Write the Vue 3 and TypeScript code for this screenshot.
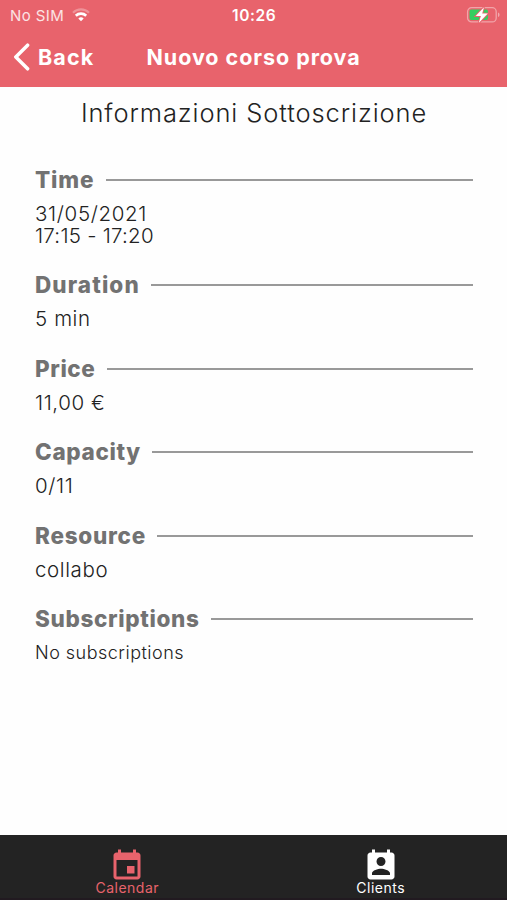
<script setup lang="ts">
interface Section {
  id: string
  title: string
  value: string
}

const sections: Section[] = [
  { id: 'time', title: 'Time', value: '31/05/2021\n17:15 - 17:20' },
  { id: 'duration', title: 'Duration', value: '5 min' },
  { id: 'price', title: 'Price', value: '11,00 €' },
  { id: 'capacity', title: 'Capacity', value: '0/11' },
  { id: 'resource', title: 'Resource', value: 'collabo' },
  { id: 'subscriptions', title: 'Subscriptions', value: 'No subscriptions' },
]
</script>

<template>
  <div class="screen">
    <header class="header">
      <div class="status">
        <div class="carrier">
          <span>No SIM</span>
          <svg class="wifi" viewBox="0 0 18 14" width="18" height="14">
            <path d="M1 4.7a11.5 11.5 0 0 1 16 0" fill="none" stroke="#fff" stroke-opacity=".3" stroke-width="2.2" />
            <path d="M3.8 7.7a7.5 7.5 0 0 1 10.4 0" fill="none" stroke="#fff" stroke-width="2.6" />
            <path d="M6.3 10.4a4 4 0 0 1 5.4 0L9 13.2z" fill="#fff" />
          </svg>
        </div>
        <span class="clock">10:26</span>
        <svg class="battery" viewBox="0 0 34 18" width="34" height="18">
          <rect x="1.6" y="1.7" width="28.6" height="14.2" rx="4" fill="none" stroke="#fff" stroke-opacity=".42" stroke-width="1.3" />
          <path d="M32 6.5q1.6 .6 1.6 2.3t-1.6 2.3z" fill="#fff" fill-opacity=".45" />
          <rect x="3.5" y="3.6" width="18.5" height="10.4" rx="2" fill="#35ce60" />
          <path d="M18 1.2L9.7 10h5.2l-2.2 7L21.8 7.6h-5.6z" fill="#fff" stroke="#e8636c" stroke-width="1.8" paint-order="stroke" />
        </svg>
      </div>
      <nav class="navbar">
        <button class="back">
          <svg viewBox="0 0 18 28" width="18" height="28">
            <path d="M15.6 2.2L3.8 14l11.8 11.8" fill="none" stroke="#fff" stroke-width="3.5" stroke-linecap="round" stroke-linejoin="round" />
          </svg>
          <span>Back</span>
        </button>
        <h1 class="page-title">Nuovo corso prova</h1>
      </nav>
    </header>

    <main class="content">
      <h2 class="subtitle">Informazioni Sottoscrizione</h2>
      <section v-for="s in sections" :key="s.id" class="section" :class="s.id">
        <h3 class="heading">{{ s.title }}</h3>
        <p class="value">{{ s.value }}</p>
      </section>
    </main>

    <footer class="tabs">
      <div class="tab active">
        <svg viewBox="0 0 24 24" width="36" height="36">
          <path fill="currentColor" d="M17 12h-5v5h5v-5zM16 1v2H8V1H6v2H5c-1.11 0-1.99.9-1.99 2L3 19c0 1.1.89 2 2 2h14c1.1 0 2-.9 2-2V5c0-1.1-.9-2-2-2h-1V1h-2zm3 18H5V8h14v11z" />
        </svg>
        <span>Calendar</span>
      </div>
      <div class="tab">
        <svg viewBox="0 0 24 24" width="36" height="36">
          <path fill="currentColor" d="M19 3h-1V1h-2v2H8V1H6v2H5c-1.11 0-2 .9-2 2v14c0 1.1.89 2 2 2h14c1.1 0 2-.9 2-2V5c0-1.1-.9-2-2-2zm-7 3c1.66 0 3 1.34 3 3s-1.34 3-3 3-3-1.34-3-3 1.34-3 3-3zm6 12H6v-1c0-2 4-3.1 6-3.1s6 1.1 6 3.1v1z" />
        </svg>
        <span>Clients</span>
      </div>
    </footer>
  </div>
</template>

<style>
body {
  background: #fff;
}
</style>

<style scoped>
.screen {
  display: flex;
  flex-direction: column;
  height: 900px;
  overflow: hidden;
  font-family: Inter, "Liberation Sans", sans-serif;
  background: #fefefe;
}
h1, h2, h3, p {
  margin: 0;
}
svg {
  flex: none;
  display: block;
}
.header {
  height: 86.5px;
  flex: none;
  color: #fff;
  background: #e8636c;
}
.status {
  display: grid;
  grid-template-columns: 1fr auto 1fr;
  align-items: center;
  height: 30px;
  padding: 0 7px 0 10px;
}
.carrier {
  display: flex;
  align-items: center;
  gap: 7.5px;
  font-size: 15px;
  letter-spacing: 0.4px;
  color: #fbe3e4;
}
.clock {
  margin-left: -1.5px;
  font-size: 15.5px;
  font-weight: 600;
  letter-spacing: 0.6px;
}
.battery {
  justify-self: end;
  margin-top: -1px;
}
.navbar {
  display: flex;
  align-items: center;
  height: 53px;
  padding-left: 12px;
}
.back {
  display: flex;
  align-items: center;
  gap: 8px;
  width: 134.5px;
  padding: 0;
  border: 0;
  background: none;
  color: inherit;
  font: 700 21.5px/28px Inter, sans-serif;
  letter-spacing: 1.1px;
}
.page-title {
  font-size: 21.5px;
  font-weight: 700;
  line-height: 28px;
  letter-spacing: 0.95px;
}
.content {
  flex: 1;
  padding: 9.5px 34px 0 35px;
}
.subtitle {
  margin-bottom: 36px;
  font-size: 25.5px;
  font-weight: 300;
  line-height: 34px;
  letter-spacing: 0.9px;
  text-align: center;
  color: #222;
}
.section {
  margin-bottom: 25.1px;
}
.heading {
  display: flex;
  align-items: center;
  gap: 11.2px;
  margin-bottom: 9px;
  font-size: 22.5px;
  font-weight: 800;
  line-height: 28px;
  color: #727272;
}
.heading::after {
  content: "";
  flex: 1;
  height: 2px;
  background: #999;
}
.value {
  font-size: 20.5px;
  font-weight: 300;
  line-height: 21.5px;
  letter-spacing: 0.6px;
  white-space: pre-line;
  color: #222;
}
.time .heading { letter-spacing: 0.85px; }
.duration .heading { letter-spacing: 1.1px; }
.price .heading { letter-spacing: 0.6px; }
.capacity .heading { letter-spacing: 0.65px; }
.resource .heading { letter-spacing: 0.75px; }
.subscriptions .heading { letter-spacing: 0.65px; }
.time .value { letter-spacing: 0.65px; }
.time .value::first-line { letter-spacing: 0.65px; }
.time .value { letter-spacing: 0.25px; }
.subscriptions .value {
  font-size: 18px;
  letter-spacing: 0.48px;
}
.tabs {
  display: flex;
  height: 63.5px;
  flex: none;
  background: #232323;
  border-bottom: 2px solid #211a20;
}
.tab {
  flex: 1;
  display: flex;
  flex-direction: column;
  align-items: center;
  padding: 13px 0 0 1px;
  color: #fff;
  font-size: 14px;
  line-height: 16px;
  letter-spacing: 0.5px;
}
.tab span {
  margin-top: -3.5px;
}
.tab.active {
  color: #e8636c;
}
</style>
